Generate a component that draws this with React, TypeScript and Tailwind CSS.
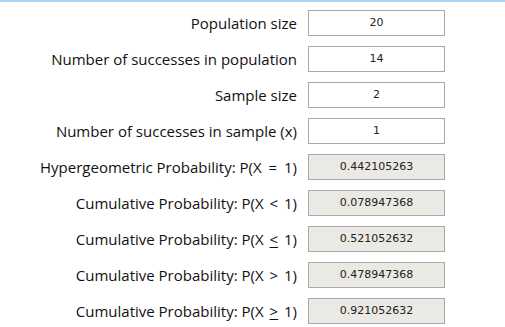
const Op = ({ sym, under, wide }: { sym: string; under?: boolean; wide?: boolean }) => (
  <span className={`${wide ? 'mx-[3px]' : 'mx-[2px]'} ${under ? 'underline underline-offset-2' : ''}`}>
    {sym}
  </span>
);

const rows: { label: React.ReactNode; value: string; readOnly?: boolean }[] = [
  { label: 'Population size', value: '20' },
  { label: 'Number of successes in population', value: '14' },
  { label: 'Sample size', value: '2' },
  { label: 'Number of successes in sample (x)', value: '1' },
  {
    label: <>Hypergeometric Probability: P(X <Op sym="=" wide /> 1)</>,
    value: '0.442105263',
    readOnly: true,
  },
  { label: <>Cumulative Probability: P(X <Op sym="<" /> 1)</>, value: '0.078947368', readOnly: true },
  { label: <>Cumulative Probability: P(X <Op sym="<" under /> 1)</>, value: '0.521052632', readOnly: true },
  { label: <>Cumulative Probability: P(X <Op sym=">" /> 1)</>, value: '0.478947368', readOnly: true },
  { label: <>Cumulative Probability: P(X <Op sym=">" under /> 1)</>, value: '0.921052632', readOnly: true },
];

const App = () => {
  return (
    <div className="w-[505px] h-[327px] bg-white border-t-2 border-[#abd3f5] pt-2 font-['Open_Sans',sans-serif]">
      <div className="flex flex-col gap-[10px]">
        {rows.map((row, i) => (
          <div key={i} className="flex items-center h-[26px]">
            <div className="w-[297px] text-right text-[15px] text-[#111] whitespace-nowrap">
              {row.label}
            </div>
            <div
              className={`ml-[11px] w-[137px] h-[26px] border border-[#a9a9a9] flex items-center justify-center text-[11px] text-[#222] font-['DejaVu_Sans',sans-serif] ${
                row.readOnly ? 'bg-[#ebe9e3]' : 'bg-white'
              }`}
            >
              {row.value}
            </div>
          </div>
        ))}
      </div>
    </div>
  );
};

export default App;
